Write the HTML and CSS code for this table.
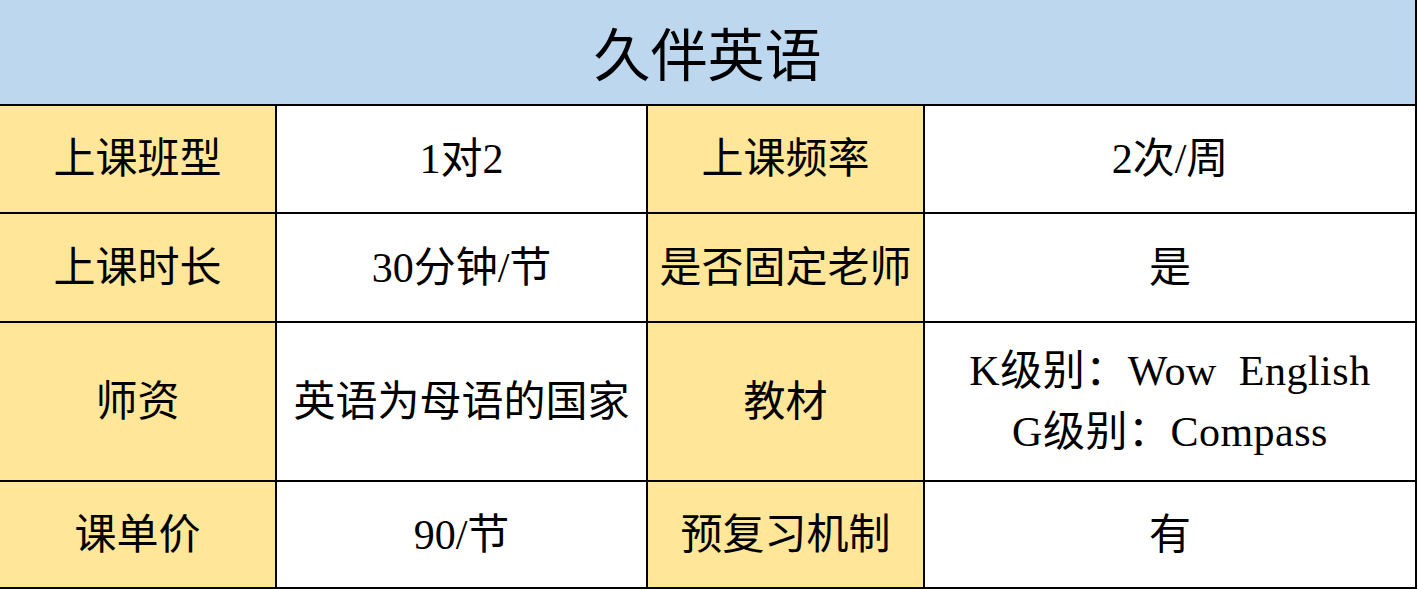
FILE: index.html
```html
<!DOCTYPE html>
<html lang="zh-CN">
<head>
<meta charset="utf-8">
<title>久伴英语</title>
<link rel="stylesheet" href="styles.css">
</head>
<body>
<div class="sheet">
  <div class="title">久伴英语</div>

  <div class="cell key">上课班型</div>
  <div class="cell val">1对2</div>
  <div class="cell key">上课频率</div>
  <div class="cell val">2次/周</div>

  <div class="cell key">上课时长</div>
  <div class="cell val">30分钟/节</div>
  <div class="cell key">是否固定老师</div>
  <div class="cell val">是</div>

  <div class="cell key">师资</div>
  <div class="cell val">英语为母语的国家</div>
  <div class="cell key">教材</div>
  <div class="cell val multi"><span>K级别：Wow&nbsp;&nbsp;English</span><span>G级别：Compass</span></div>

  <div class="cell key">课单价</div>
  <div class="cell val">90/节</div>
  <div class="cell key">预复习机制</div>
  <div class="cell val">有</div>
</div>
</body>
</html>
```

FILE: styles.css
```css
html, body {
  margin: 0;
  padding: 0;
  background: #ffffff;
}

.sheet {
  display: grid;
  grid-template-columns: 275px 369px 275px 490px;
  grid-template-rows: 104px 106px 107px 157px 105px;
  gap: 2px;
  padding: 0 2px 2px 0;
  width: 1415px;
  background: #000000;
  font-family: "Liberation Serif", "Noto Sans CJK SC", serif;
  color: #000000;
}

.title {
  grid-column: 1 / -1;
  background: #bdd7ee;
  display: flex;
  align-items: center;
  justify-content: center;
  font-size: 57px;
  font-family: "Noto Sans CJK SC", sans-serif;
  padding-bottom: 2px;
}

.cell {
  display: flex;
  align-items: center;
  justify-content: center;
  font-size: 42px;
  line-height: 1;
  white-space: nowrap;
}

.key {
  background: #ffe699;
}

.val {
  background: #ffffff;
}

.multi {
  flex-direction: column;
  gap: 19px;
  font-size: 42px;
  letter-spacing: 0.5px;
}
```
